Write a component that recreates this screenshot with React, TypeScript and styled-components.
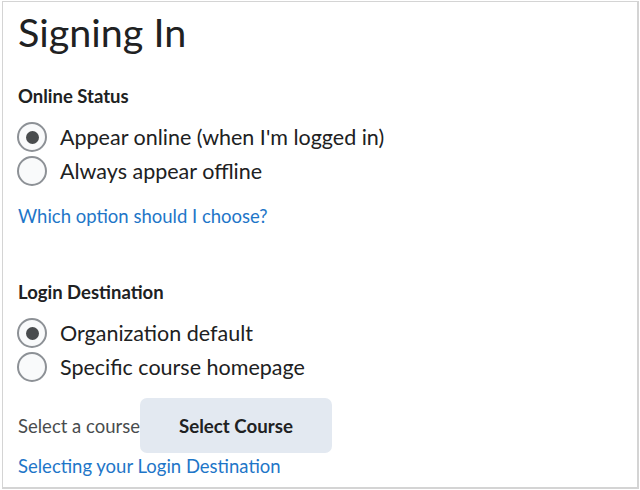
import React from 'react';
import styled, { createGlobalStyle } from 'styled-components';

const GlobalStyle = createGlobalStyle`
  html, body {
    margin: 0;
    padding: 0;
    background: #ffffff;
  }
  body {
    font-family: Lato, "Open Sans", sans-serif;
    color: #202122;
  }
`;

const Frame = styled.div`
  box-sizing: border-box;
  margin: 1px 0 0 2px;
  width: 637px;
  height: 488px;
  border: 1px solid #d4d4d4;
  border-width: 1px 2px 2px 1px;
  padding: 6px 0 0 15px;
  overflow: hidden;
`;

const Title = styled.h1`
  margin: 0;
  font-size: 39.5px;
  font-weight: 400;
  line-height: 48px;
  color: #202122;
`;

const Section = styled.section<{ $top: number }>`
  margin-top: ${p => p.$top}px;
`;

const Heading = styled.h2`
  margin: 0;
  font-size: 18.5px;
  font-weight: 700;
  line-height: 20px;
  color: #202122;
`;

const RadioList = styled.div`
  margin-top: 16px;
  display: flex;
  flex-direction: column;
  gap: 4px;
`;

const RadioRow = styled.label`
  display: flex;
  align-items: center;
  gap: 13px;
  height: 30px;
  font-size: 21.5px;
  color: #202122;
`;

const Circle = styled.span<{ $checked?: boolean }>`
  box-sizing: border-box;
  width: 30px;
  height: 30px;
  margin-left: -1px;
  border-radius: 50%;
  border: 2px solid #8d9196;
  background: #f9fafb;
  display: flex;
  align-items: center;
  justify-content: center;

  &::after {
    content: '';
    display: ${p => (p.$checked ? 'block' : 'none')};
    width: 13px;
    height: 13px;
    border-radius: 50%;
    background: #494c4e;
  }
`;

const HelpLink = styled.a<{ $top: number }>`
  display: block;
  margin-top: ${p => p.$top}px;
  font-size: 18.5px;
  line-height: 22px;
  color: #1e76c8;
  text-decoration: none;
`;

const CourseRow = styled.div`
  margin-top: 16px;
  display: flex;
  align-items: center;
`;

const Hint = styled.span`
  font-size: 18.5px;
  color: #494c4e;
`;

const Button = styled.button`
  box-sizing: border-box;
  width: 192px;
  height: 55px;
  margin-left: 0;
  border: none;
  border-radius: 7px;
  background: #e3e9f1;
  font-family: Lato, "Open Sans", sans-serif;
  font-size: 18.7px;
  font-weight: 700;
  color: #202122;
`;

type Option = { label: string; checked?: boolean };

const RadioGroup = ({ options }: { options: Option[] }) => (
  <RadioList>
    {options.map(o => (
      <RadioRow key={o.label}>
        <Circle $checked={o.checked} />
        {o.label}
      </RadioRow>
    ))}
  </RadioList>
);

export default function App() {
  return (
    <>
      <GlobalStyle />
      <Frame>
        <Title>Signing In</Title>
        <Section $top={30}>
          <Heading>Online Status</Heading>
          <RadioGroup
            options={[
              { label: "Appear online (when I'm logged in)", checked: true },
              { label: 'Always appear offline' },
            ]}
          />
          <HelpLink $top={19}>Which option should I choose?</HelpLink>
        </Section>
        <Section $top={55}>
          <Heading>Login Destination</Heading>
          <RadioGroup
            options={[
              { label: 'Organization default', checked: true },
              { label: 'Specific course homepage' },
            ]}
          />
          <CourseRow>
            <Hint>Select a course</Hint>
            <Button>Select Course</Button>
          </CourseRow>
          <HelpLink $top={2}>Selecting your Login Destination</HelpLink>
        </Section>
      </Frame>
    </>
  );
}
